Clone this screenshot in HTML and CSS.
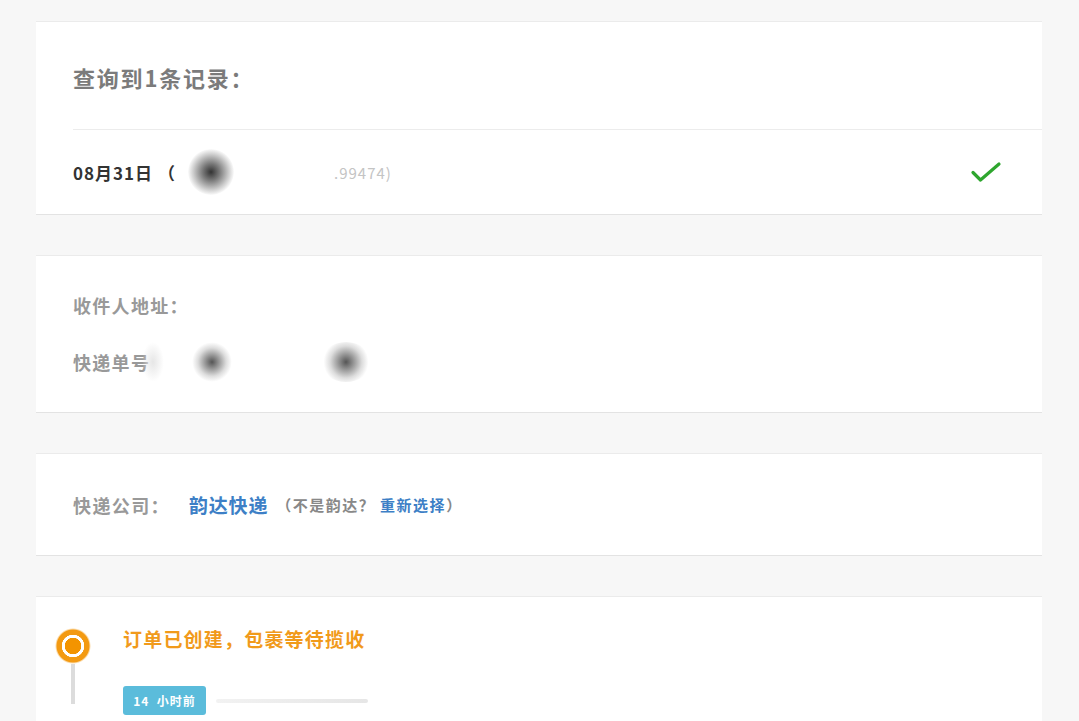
FILE: index.html
```html
<!DOCTYPE html>
<html lang="zh-CN">
<head>
<meta charset="utf-8">
<title>查询结果</title>
<link rel="stylesheet" href="styles.css">
</head>
<body>
<main class="page">
  <section class="card result">
    <h2 class="result-title">查询到1条记录：</h2>
    <div class="result-row">
      <span class="date">08月31日 （<span class="blur blur-a"></span><span class="blur-gap"></span><span class="faint">.99474)</span></span>
      <svg class="check" width="32" height="24" viewBox="0 0 32 24"><path d="M3 12.5 L10.5 20 L29 4" fill="none" stroke="#2ea62e" stroke-width="3.2" stroke-linecap="round" stroke-linejoin="round"/></svg>
    </div>
  </section>

  <section class="card info">
    <p class="label">收件人地址：</p>
    <p class="label">快递单号<span class="blur blur-b"></span><span class="blur blur-c"></span><span class="blur blur-d"></span></p>
  </section>

  <section class="card company">
    <span class="label">快递公司：</span>
    <span class="company-name">韵达快递</span>
    <span class="note">（不是韵达？ <a class="reselect" href="#">重新选择</a>）</span>
  </section>

  <section class="card track">
    <div class="marker">
      <span class="dot"></span>
      <span class="stem"></span>
    </div>
    <div class="track-body">
      <h3 class="track-title">订单已创建，包裹等待揽收</h3>
      <div class="track-meta">
        <span class="badge">14&nbsp; 小时前</span>
        <span class="faint-line"></span>
      </div>
    </div>
  </section>
</main>
</body>
</html>
```

FILE: styles.css
```css
* { box-sizing: border-box; }
html, body { margin: 0; padding: 0; }
body {
  background: #f7f7f7;
  font-family: "Noto Sans CJK SC", "Noto Sans", "Liberation Sans", sans-serif;
  color: #333;
  height: 721px;
  overflow: hidden;
}
.page {
  width: 1006px;
  margin-left: 36px;
  padding-top: 21px;
  display: flex;
  flex-direction: column;
  gap: 40px;
}
.card {
  background: #fff;
  border-top: 1px solid #ebebeb;
  border-bottom: 1px solid #e3e3e3;
}
.result-title {
  margin: 0 0 0 37px;
  height: 108px;
  display: flex;
  align-items: center;
  padding-top: 2px;
  font-size: 22px;
  font-weight: 700;
  color: #7b7b7b;
  letter-spacing: 1.8px;
  border-bottom: 1px solid #ececec;
}
.result-row {
  height: 84px;
  padding: 0 40px 0 37px;
  display: flex;
  align-items: center;
  justify-content: space-between;
}
.date {
  font-size: 17px;
  font-weight: 700;
  color: #333;
  letter-spacing: 1px;
  display: flex;
  align-items: center;
}
.blur {
  display: inline-block;
  border-radius: 50%;
}
.blur-a {
  width: 46px; height: 46px;
  margin: -10px 0 -10px 12px;
  background: radial-gradient(circle, #333 0%, #777 25%, #cfcfcf 55%, rgba(255,255,255,0) 72%);
}
.blur-gap { display: inline-block; width: 100px; }
.faint { color: #c4c4c4; font-weight: 400; font-size: 15px; letter-spacing: 1px; }

.info { padding: 35px 0 36px 37px; }
.label {
  margin: 0;
  font-size: 18px;
  font-weight: 700;
  color: #999;
  line-height: 28px;
  height: 28px;
  letter-spacing: 1.3px;
  display: flex;
  align-items: center;
}
.info .label + .label { margin-top: 29px; }
.blur-b {
  width: 22px; height: 40px; margin: -6px 0 -6px -8px;
  background: radial-gradient(ellipse, #e6e6e6 0%, rgba(255,255,255,0) 70%);
}
.blur-c {
  width: 40px; height: 40px; margin: -6px 0 -6px 28px;
  background: radial-gradient(circle, #555 0%, #999 25%, #ddd 50%, rgba(255,255,255,0) 70%);
}
.blur-d {
  width: 50px; height: 40px; margin: -6px 0 -6px 89px;
  background: radial-gradient(circle, #555 0%, #999 25%, #ddd 50%, rgba(255,255,255,0) 70%);
}

.company {
  height: 103px;
  padding-left: 37px;
  display: flex;
  align-items: center;
}
.company .label { width: 116px; letter-spacing: 1.4px; }
.company-name {
  font-size: 19px;
  font-weight: 700;
  color: #3d7fc6;
  letter-spacing: 0.8px;
  margin-right: 8px;
}
.note {
  font-size: 15px;
  font-weight: 700;
  color: #888;
  letter-spacing: 1.5px;
}
.reselect {
  color: #3d7fc6;
  text-decoration: none;
  font-weight: 700;
}

.track {
  border-bottom: none;
  padding: 20px 0 0 19px;
  display: flex;
  gap: 32px;
  min-height: 130px;
}
.marker {
  width: 36px;
  display: flex;
  flex-direction: column;
  align-items: center;
  padding-top: 11px;
}
.dot {
  width: 36px; height: 36px;
  border-radius: 50%;
  background: radial-gradient(circle, #f39400 0 8px, #fff 8.5px 11px, #f39a12 11.5px 16px, rgba(243,154,18,0.35) 17px, rgba(255,255,255,0) 18px);
}
.stem {
  width: 4px;
  height: 40px;
  background: #dcdcdc;
}
.track-body { padding-top: 2px; }
.track-title {
  margin: 0;
  font-size: 19px;
  font-weight: 700;
  color: #f19a1b;
  letter-spacing: 1.2px;
  line-height: 40px;
}
.track-meta {
  margin-top: 27px;
  display: flex;
  align-items: center;
  gap: 10px;
}
.badge {
  background: #5bbcdb;
  color: #fff;
  font-size: 12px;
  font-weight: 700;
  letter-spacing: 1px;
  border-radius: 3px;
  height: 29px;
  width: 83px;
  display: inline-flex;
  align-items: center;
  justify-content: center;
}
.faint-line {
  width: 152px;
  height: 4px;
  background: linear-gradient(90deg, #f2f2f2, #e6e6e6);
  border-radius: 2px;
}
```
